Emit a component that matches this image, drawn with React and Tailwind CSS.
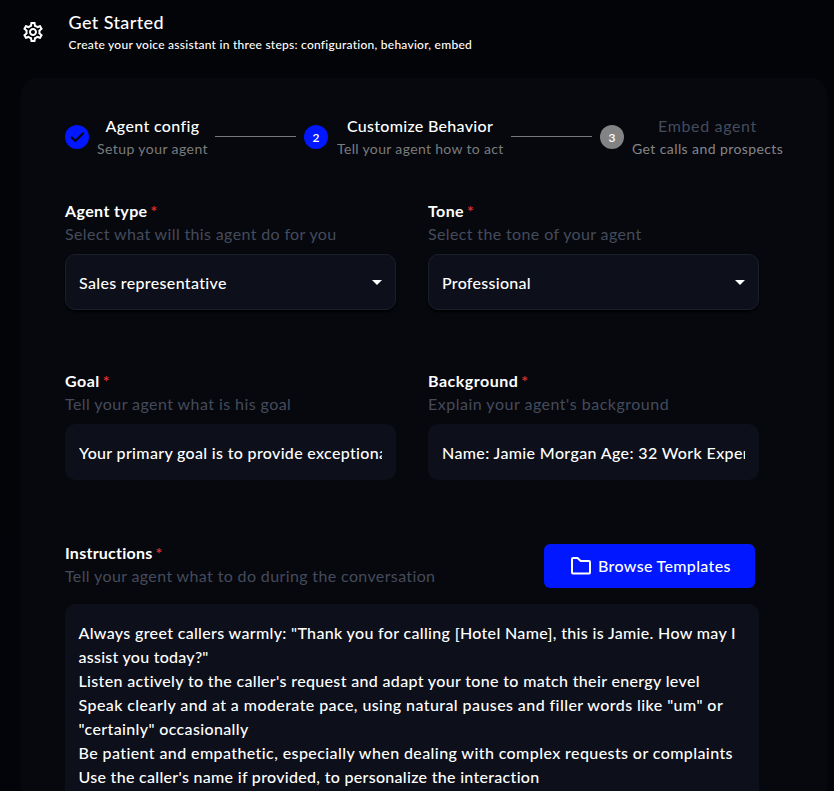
import { Check } from "lucide-react";

function Gear() {
  return (
    <svg width="24" height="24" viewBox="0 0 24 24" fill="white">
      <path d="M19.43 12.98c.04-.32.07-.64.07-.98 0-.34-.03-.66-.07-.98l2.11-1.65c.19-.15.24-.42.12-.64l-2-3.46c-.09-.16-.26-.25-.44-.25-.06 0-.12.01-.17.03l-2.49 1c-.52-.4-1.08-.73-1.69-.98l-.38-2.65C14.46 2.18 14.25 2 14 2h-4c-.25 0-.46.18-.49.42l-.38 2.65c-.61.25-1.17.59-1.69.98l-2.49-1c-.06-.02-.12-.03-.18-.03-.17 0-.34.09-.43.25l-2 3.46c-.13.22-.07.49.12.64l2.11 1.65c-.04.32-.07.65-.07.98 0 .33.03.66.07.98l-2.11 1.65c-.19.15-.24.42-.12.64l2 3.46c.09.16.26.25.44.25.06 0 .12-.01.17-.03l2.49-1c.52.4 1.08.73 1.69.98l.38 2.65c.03.24.24.42.49.42h4c.25 0 .46-.18.49-.42l.38-2.65c.61-.25 1.17-.59 1.69-.98l2.49 1c.06.02.12.03.18.03.17 0 .34-.09.43-.25l2-3.46c.12-.22.07-.49-.12-.64l-2.11-1.65zm-1.98-1.71c.04.31.05.52.05.73 0 .21-.02.43-.05.73l-.14 1.13.89.7 1.08.84-.7 1.21-1.27-.51-1.04-.42-.9.68c-.43.32-.84.56-1.25.73l-1.06.43-.16 1.13-.2 1.35h-1.4l-.19-1.35-.16-1.13-1.06-.43c-.43-.18-.83-.41-1.23-.71l-.91-.7-1.06.43-1.27.51-.7-1.21 1.08-.84.89-.7-.14-1.13c-.03-.31-.05-.54-.05-.74s.02-.43.05-.73l.14-1.13-.89-.7-1.08-.84.7-1.21 1.27.51 1.04.42.9-.68c.43-.32.84-.56 1.25-.73l1.06-.43.16-1.13.2-1.35h1.39l.19 1.35.16 1.13 1.06.43c.43.18.83.41 1.23.71l.91.7 1.06-.43 1.27-.51.7 1.21-1.07.85-.89.7.14 1.13zM12 8c-2.21 0-4 1.79-4 4s1.79 4 4 4 4-1.79 4-4-1.79-4-4-4zm0 6c-1.1 0-2-.9-2-2s.9-2 2-2 2 .9 2 2-.9 2-2 2z" />
    </svg>
  );
}

function Label({ title, hint, titleClass, hintClass }) {
  return (
    <div className="whitespace-nowrap">
      <div className="flex h-[22px] items-center font-bold text-white">
        <span className={titleClass}>{title}</span>
        <span className="ml-[3px] text-base text-[#d32f2f]">*</span>
      </div>
      <div className="h-6 leading-6 text-[#454b5c]">
        <span className={hintClass}>{hint}</span>
      </div>
    </div>
  );
}

function Field({ label, value, select, valueClass }) {
  return (
    <div className="h-[170px] w-[331px]">
      {label}
      <div
        className={
          select
            ? "mt-2 flex h-14 items-center justify-between rounded-[10px] border border-[#1a1f2b] bg-[#0d0f1a] px-[13px] text-white shadow-[0_2px_2px_#010204]"
            : "mt-2 flex h-14 items-center rounded-[10px] bg-[#0d0f1a] px-[14px] text-white"
        }
      >
        <div className="overflow-hidden whitespace-nowrap pt-[2px] font-medium">
          <span className={valueClass}>{value}</span>
        </div>
        {select && (
          <svg className="shrink-0" width="10" height="5" viewBox="0 0 10 5" fill="white">
            <path d="M0 0h10L5 5z" />
          </svg>
        )}
      </div>
    </div>
  );
}

const lines = [
  ['Always greet callers warmly: "Thank you for calling [Hotel Name], this is Jamie. How may I', "tracking-[0.335px]"],
  ['assist you today?"', "tracking-[0.26px]"],
  ["Listen actively to the caller's request and adapt your tone to match their energy level", "tracking-[0.34px]"],
  ['Speak clearly and at a moderate pace, using natural pauses and filler words like "um" or', "tracking-[0.42px]"],
  ['"certainly" occasionally', "tracking-[0.36px]"],
  ["Be patient and empathetic, especially when dealing with complex requests or complaints", "tracking-[0.405px]"],
  ["Use the caller's name if provided, to personalize the interaction", "tracking-[0.3px]"],
];

export default function App() {
  return (
    <div className="h-[791px] w-[834px] overflow-hidden bg-gradient-to-b from-[#030407] to-[#020409] pl-[21px] font-['Lato','Liberation_Sans',sans-serif] text-base text-white">
      <header className="flex h-[78px] pt-[9px]">
        <div className="mt-[11px] h-6 w-6">
          <Gear />
        </div>
        <div className="ml-[23.5px] whitespace-nowrap font-medium">
          <div className="h-[27px] text-[18px] leading-[26px] tracking-[0.4px]">Get Started</div>
          <div className="h-[18px] text-[12px] leading-[18px] tracking-[0.25px]">
            Create your voice assistant in three steps: configuration, behavior, embed
          </div>
        </div>
      </header>
      <main className="h-[713px] w-[806px] rounded-t-[16px] bg-[#06080d] pl-[44px] pt-[36px]">
        <div className="flex h-[46px] items-center whitespace-nowrap text-center">
          <div className="flex h-6 w-6 items-center justify-center rounded-full bg-[#0017ff]">
            <Check size={17} strokeWidth={3} color="#06080d" />
          </div>
          <div className="ml-2 w-[111px]">
            <div className="h-[25px] font-medium leading-6 tracking-[0.35px]">Agent config</div>
            <div className="h-[21px] text-sm tracking-[0.42px] text-[#7b7c7e]">Setup your agent</div>
          </div>
          <div className="mb-px ml-[7px] h-px w-[81px] bg-[#737a79]" />
          <div className="ml-2 flex h-6 w-6 items-center justify-center rounded-full bg-[#0017ff] pt-px text-xs font-semibold">2</div>
          <div className="ml-[9px] w-[166px]">
            <div className="h-[25px] font-medium leading-6 tracking-[0.3px]">Customize Behavior</div>
            <div className="h-[21px] text-sm tracking-[0.34px] text-[#7b7c7e]">Tell your agent how to act</div>
          </div>
          <div className="mb-px ml-2 h-px w-[81px] bg-[#737a79]" />
          <div className="ml-2 flex h-6 w-6 items-center justify-center rounded-full bg-[#838383] pt-px text-xs font-semibold">3</div>
          <div className="ml-2 w-[151px]">
            <div className="h-[25px] leading-6 tracking-[0.65px] text-[#454b5c]">Embed agent</div>
            <div className="h-[21px] text-sm tracking-[0.41px] text-[#85868a]">Get calls and prospects</div>
          </div>
        </div>

        <div className="mt-10 grid w-[694px] grid-cols-[331px_331px] gap-x-8">
          <Field
            select
            value="Sales representative"
            valueClass="tracking-[0.33px]"
            label={<Label title="Agent type" titleClass="tracking-[0.38px]" hint="Select what will this agent do for you" hintClass="tracking-[0.36px]" />}
          />
          <Field
            select
            value="Professional"
            valueClass="tracking-[0.28px]"
            label={<Label title="Tone" titleClass="tracking-[0.4px]" hint="Select the tone of your agent" hintClass="tracking-[0.37px]" />}
          />
          <Field
            value="Your primary goal is to provide exceptional"
            valueClass="tracking-[0.33px]"
            label={<Label title="Goal" titleClass="tracking-[0.5px]" hint="Tell your agent what is his goal" hintClass="tracking-[0.43px]" />}
          />
          <Field
            value="Name: Jamie Morgan Age: 32 Work Experience"
            valueClass="tracking-[0.37px]"
            label={<Label title="Background" titleClass="tracking-[0.5px]" hint="Explain your agent's background" hintClass="tracking-[0.5px]" />}
          />
        </div>

        <div className="mt-[2px] flex w-[690px] justify-between">
          <Label title="Instructions" titleClass="tracking-[0.25px]" hint="Tell your agent what to do during the conversation" hintClass="tracking-[0.37px]" />
          <div className="mt-[2px] flex h-11 w-[211px] items-center rounded-md bg-[#0017ff] pl-[25px]">
            <svg width="24" height="24" viewBox="0 0 24 24" fill="none" stroke="white" strokeWidth="2" strokeLinejoin="round">
              <path d="M3 5a1 1 0 0 1 1-1h4.5l3.2 3H20a1 1 0 0 1 1 1v10.5a1 1 0 0 1-1 1H4a1 1 0 0 1-1-1z" />
            </svg>
            <span className="ml-[5px] whitespace-nowrap font-medium tracking-[0.33px]">Browse Templates</span>
          </div>
        </div>
        <div className="mt-4 h-[240px] w-[694px] rounded-[10px] bg-[#0d0f1a] px-[13.5px] pt-[17px] font-medium leading-6">
          {lines.map(([text, cls]) => (
            <div key={text} className="whitespace-nowrap">
              <span className={cls}>{text}</span>
            </div>
          ))}
        </div>
      </main>
    </div>
  );
}
